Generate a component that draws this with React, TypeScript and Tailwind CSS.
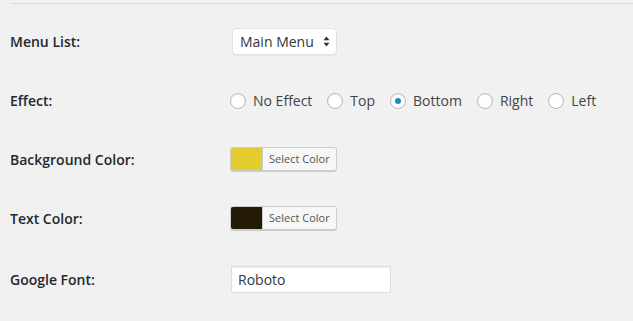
import React, { useState } from "react";

const effects = ["No Effect", "Top", "Bottom", "Right", "Left"];

const Label = ({ children }: { children: React.ReactNode }) => (
  <div className="w-[220px] shrink-0 pl-[10px] text-[14px] font-semibold text-[#23282d]">
    {children}
  </div>
);

const ColorButton = ({ color }: { color: string }) => (
  <button
    type="button"
    className="flex h-[24px] items-stretch overflow-hidden rounded-[3px] border border-[#ccc] bg-[#f7f7f7] shadow-[0_1px_0_#ccc]"
  >
    <span className="w-[31px]" style={{ backgroundColor: color }} />
    <span className="flex items-center border-l border-[#ccc] px-[6px] text-[11px] text-[#555]">
      Select Color
    </span>
  </button>
);

const App = () => {
  const [effect, setEffect] = useState("Bottom");
  const [font, setFont] = useState("Roboto");

  return (
    <div
      className="h-[321px] w-[633px] overflow-hidden bg-[#f1f1f1] pt-[3px]"
      style={{ fontFamily: '"Open Sans", "Liberation Sans", sans-serif' }}
    >
      <div className="ml-[10px] border-t border-[#dcdcdc]" />
      <div className="flex flex-col pt-[7px]">
        <div className="flex h-[60px] items-center">
          <Label>Menu List:</Label>
          <div className="ml-[12px] flex h-[27px] w-[105px] items-center justify-between rounded-[4px] border border-[#e2e2e2] bg-white pl-[7px] pr-[6px] text-[14px] text-[#32373c] shadow-[0_1px_1px_rgba(0,0,0,0.04)]">
            <span>Main Menu</span>
            <svg width="7" height="11" viewBox="0 0 7 11">
              <path d="M3.5 0.5 L6.5 4.2 H0.5 Z" fill="#333" />
              <path d="M3.5 10.5 L6.5 6.8 H0.5 Z" fill="#333" />
            </svg>
          </div>
        </div>

        <div className="flex h-[59px] items-center">
          <Label>Effect:</Label>
          <div className="ml-[10px] flex items-center text-[14px] text-[#444]">
            {effects.map((e) => (
              <label
                key={e}
                className="mr-[15px] flex cursor-pointer items-center"
                onClick={() => setEffect(e)}
              >
                <span className="mr-[7px] flex h-[16px] w-[16px] items-center justify-center rounded-full border border-[#b4b9be] bg-white shadow-[inset_0_1px_2px_rgba(0,0,0,0.07)]">
                  {effect === e && (
                    <span className="h-[6px] w-[6px] rounded-full bg-[#1e8cbe]" />
                  )}
                </span>
                {e}
              </label>
            ))}
          </div>
        </div>

        <div className="flex h-[58px] items-center">
          <Label>Background Color:</Label>
          <div className="ml-[10px]">
            <ColorButton color="#e2cc2f" />
          </div>
        </div>

        <div className="flex h-[60px] items-center">
          <Label>Text Color:</Label>
          <div className="ml-[10px]">
            <ColorButton color="#231a08" />
          </div>
        </div>

        <div className="flex h-[62px] items-center">
          <Label>Google Font:</Label>
          <input
            type="text"
            value={font}
            onChange={(e) => setFont(e.target.value)}
            className="ml-[11px] h-[27px] w-[160px] border border-[#ddd] bg-white px-[6px] text-[14px] text-[#32373c] shadow-[inset_0_1px_2px_rgba(0,0,0,0.07)] outline-none"
          />
        </div>
      </div>
    </div>
  );
};

export default App;
